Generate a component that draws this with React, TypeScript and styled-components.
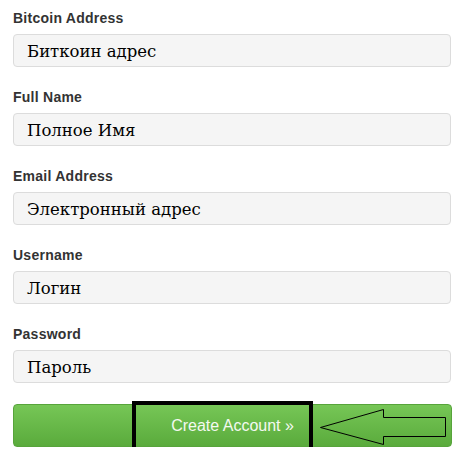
import React from "react";
import styled, { createGlobalStyle } from "styled-components";

const Global = createGlobalStyle`
  html, body { margin: 0; padding: 0; background: #ffffff; }
  body { font-family: "Liberation Sans", Arial, sans-serif; }
`;

const Form = styled.form`
  display: flex;
  flex-direction: column;
  width: 438px;
  padding: 8px 0 0 13px;
`;

const Field = styled.div`
  display: flex;
  flex-direction: column;
  margin-bottom: 20px;
`;

const Label = styled.label`
  font-family: "Liberation Sans", Arial, sans-serif;
  font-weight: bold;
  font-size: 14px;
  letter-spacing: 0.25px;
  line-height: 21px;
  color: #333333;
  margin-bottom: 5px;
`;

const Input = styled.div`
  box-sizing: border-box;
  height: 33px;
  border: 1px solid #dcdcdc;
  border-radius: 4px;
  background: #f5f5f5;
  padding: 1px 0 0 13px;
  display: flex;
  align-items: center;
  font-family: "DejaVu Serif", "Liberation Serif", serif;
  font-size: 16.5px;
  color: #000000;
`;

const ButtonWrap = styled.div`
  position: relative;
  margin-top: 1px;
`;

const Button = styled.button`
  box-sizing: border-box;
  width: 439px;
  height: 43px;
  border: 1px solid #57a43b;
  border-radius: 4px;
  background: linear-gradient(to bottom, #76c656, #5aab3c);
  color: #f4f9f1;
  font-family: "Liberation Sans", Arial, sans-serif;
  font-size: 16px;
  display: flex;
  align-items: center;
  justify-content: center;
  padding: 0;
`;

const Highlight = styled.div`
  position: absolute;
  left: 119px;
  top: -3px;
  width: 181px;
  height: 50px;
  box-sizing: border-box;
  border: 4px solid #000000;
  pointer-events: none;
`;

const Arrow = styled.svg`
  position: absolute;
  left: 0;
  top: 0;
  pointer-events: none;
  overflow: visible;
`;

const fields: [string, string][] = [
  ["Bitcoin Address", "Биткоин адрес"],
  ["Full Name", "Полное Имя"],
  ["Email Address", "Электронный адрес"],
  ["Username", "Логин"],
  ["Password", "Пароль"],
];

export default function App() {
  return (
    <>
      <Global />
      <Form>
        {fields.map(([label, value]) => (
          <Field key={label}>
            <Label>{label}</Label>
            <Input>{value}</Input>
          </Field>
        ))}
        <ButtonWrap>
          <Button type="button">Create Account »</Button>
          <Highlight />
          <Arrow width="439" height="43" viewBox="13 404 439 43">
            <polygon
              points="320.5,427.5 383.5,409.5 383.5,417.5 445.5,417.5 445.5,436.5 383.5,436.5 383.5,444.5"
              fill="none"
              stroke="#000"
              strokeWidth="1"
            />
          </Arrow>
        </ButtonWrap>
      </Form>
    </>
  );
}
